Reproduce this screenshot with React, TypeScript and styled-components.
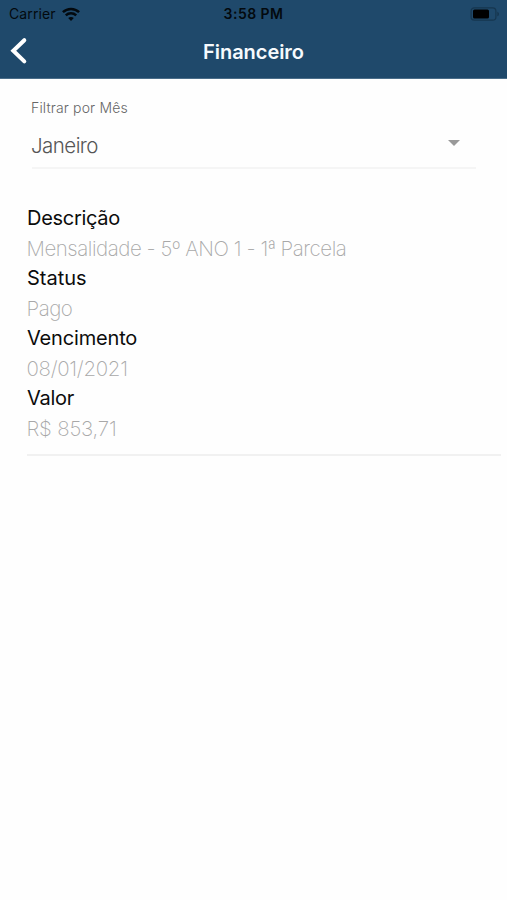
import React from 'react';
import styled, { createGlobalStyle } from 'styled-components';

const GlobalStyle = createGlobalStyle`
  * { box-sizing: border-box; }
  body {
    margin: 0;
    background: #fefefe;
    font-family: Inter, "Liberation Sans", sans-serif;
  }
`;

const Screen = styled.main`
  display: flex;
  flex-direction: column;
  min-height: 900px;
`;

const Header = styled.header`
  height: 79px;
  background: #1f496b;
  border-bottom: 1px solid #4a6d89;
`;

const StatusBar = styled.div`
  display: grid;
  grid-template-columns: 1fr auto 1fr;
  align-items: center;
  height: 27px;
  padding: 0 7px 0 9px;
  color: #03090e;
  font-size: 14px;
  line-height: 26px;
`;

const Carrier = styled.div`
  display: flex;
  align-items: center;
  gap: 6px;
  letter-spacing: 0.1px;
`;

const Clock = styled.time`
  font-weight: 600;
  font-size: 14px;
  letter-spacing: 0.45px;
  margin-left: -2px;
`;

const BatteryIcon = styled.svg`
  justify-self: end;
`;

const NavBar = styled.nav`
  display: grid;
  grid-template-columns: 60px 1fr 60px;
  align-items: center;
  height: 51px;
`;

const BackButton = styled.button`
  display: flex;
  width: 40px;
  padding: 0 0 3px 9px;
  border: 0;
  background: none;
`;

const Title = styled.h1`
  margin: 0;
  padding-bottom: 2px;
  color: #f6fafd;
  font-size: 20px;
  font-weight: 600;
  line-height: 24px;
  letter-spacing: -0.05px;
  text-align: center;
`;

const Filter = styled.section`
  margin: 19px 31px 0 32px;
  border-bottom: 2px solid #f5f5f5;
`;

const FilterLabel = styled.div`
  margin-left: -1px;
  color: #666;
  font-size: 14px;
  font-weight: 300;
  line-height: 20px;
  letter-spacing: 0.15px;
`;

const Select = styled.div`
  display: flex;
  align-items: center;
  justify-content: space-between;
  height: 49px;
  padding-right: 16px;
`;

const Selected = styled.span`
  padding-top: 5px;
  margin-left: -1px;
  color: #555;
  font-size: 20.5px;
  font-weight: 300;
  letter-spacing: -0.55px;
`;

const Caret = styled.svg`
  margin-top: 1px;
`;

const Details = styled.dl`
  margin: 34px 6px 0 27px;
  padding-bottom: 11px;
  border-bottom: 2px solid #f1f1f1;
`;

const Term = styled.dt<{ $tracking: number }>`
  height: 30px;
  color: #0c0c0c;
  font-size: 20px;
  line-height: 30px;
  letter-spacing: ${(p) => p.$tracking}px;
`;

const Value = styled.dd<{ $tracking: number }>`
  height: 29.9px;
  margin: 0 0 0 -0.5px;
  color: #a8a8a8;
  font-size: 20.5px;
  font-weight: 200;
  line-height: 31px;
  letter-spacing: ${(p) => p.$tracking}px;
`;

const entries = [
  { term: 'Descrição', termTracking: -0.3, value: 'Mensalidade - 5º ANO 1 - 1ª Parcela', tracking: -0.46 },
  { term: 'Status', termTracking: 0, value: 'Pago', tracking: -0.5 },
  { term: 'Vencimento', termTracking: -0.17, value: '08/01/2021', tracking: -0.3 },
  { term: 'Valor', termTracking: -0.25, value: 'R$ 853,71', tracking: -0.2 },
];

export default function App() {
  return (
    <Screen>
      <GlobalStyle />
      <Header>
        <StatusBar>
          <Carrier>
            Carrier
            <svg width="18" height="14" viewBox="0 0 18 14" fill="none" stroke="#03090e" strokeWidth="2.5">
              <path d="M.9 5.2C5.5.8 12.5.8 17.1 5.2" />
              <path d="M3.8 8.3c2.9-2.8 7.5-2.8 10.4 0" />
              <path d="M9 14 6.2 11.1c1.5-1.6 4.1-1.6 5.6 0Z" fill="#03090e" stroke="none" />
            </svg>
          </Carrier>
          <Clock>3:58 PM</Clock>
          <BatteryIcon width="30" height="14" viewBox="0 0 30 14">
            <rect x="1.1" y="0.8" width="24.8" height="12.4" rx="3.2" fill="none" stroke="#16364f" strokeWidth="1.2" />
            <rect x="3" y="2.5" width="16" height="9" rx="1.5" fill="#000" />
            <path d="M27.3 4.7c2.2.7 2.2 3.9 0 4.6Z" fill="#16364f" />
          </BatteryIcon>
        </StatusBar>
        <NavBar>
          <BackButton aria-label="Voltar">
            <svg width="19" height="28" viewBox="0 0 19 28" fill="none" stroke="#fff" strokeWidth="4" strokeLinecap="round">
              <path d="M15.3 3.2 4.3 13.8l11 10.6" />
            </svg>
          </BackButton>
          <Title>Financeiro</Title>
        </NavBar>
      </Header>
      <Filter>
        <FilterLabel>Filtrar por Mês</FilterLabel>
        <Select>
          <Selected>Janeiro</Selected>
          <Caret width="12" height="6" viewBox="0 0 12 6">
            <path d="M0 0h12L6 6Z" fill="#999" />
          </Caret>
        </Select>
      </Filter>
      <Details>
        {entries.map((e) => (
          <React.Fragment key={e.term}>
            <Term $tracking={e.termTracking}>{e.term}</Term>
            <Value $tracking={e.tracking}>{e.value}</Value>
          </React.Fragment>
        ))}
      </Details>
    </Screen>
  );
}
